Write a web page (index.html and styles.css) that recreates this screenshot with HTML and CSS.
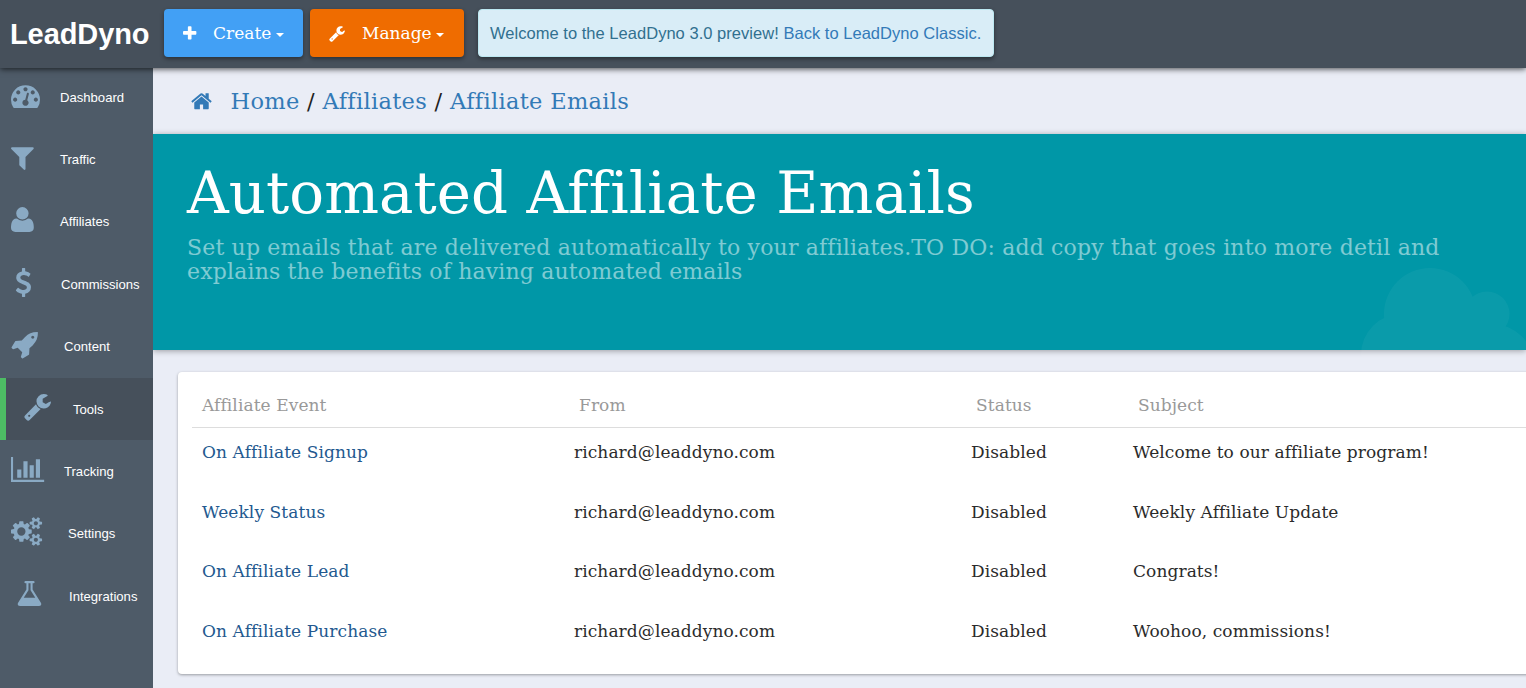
FILE: index.html
```html
<!DOCTYPE html>
<html lang="en">
<head>
<meta charset="utf-8">
<title>LeadDyno - Automated Affiliate Emails</title>
<link rel="stylesheet" href="styles.css">
</head>
<body>
<header class="topbar">
  <a class="brand">LeadDyno</a>
  <button class="btn btn-create"><svg class="btn-icon" viewBox="192 0 1408 1792"><path d="M1600 736v192q0 40-28 68t-68 28h-416v416q0 40-28 68t-68 28h-192q-40 0-68-28t-28-68v-416h-416q-40 0-68-28t-28-68v-192q0-40 28-68t68-28h416v-416q0-40 28-68t68-28h192q40 0 68 28t28 68v416h416q40 0 68 28t28 68z"/></svg><span class="btn-label">Create</span><i class="caret"></i></button>
  <button class="btn btn-manage"><svg class="btn-icon" viewBox="64 0 1664 1792"><path d="M448 1472q0-26-19-45t-45-19-45 19-19 45 19 45 45 19 45-19 19-45zm644-420l-682 682q-37 37-90 37-52 0-91-37l-106-108q-38-36-38-90 0-53 38-91l681-681q39 98 114.5 173.5t173.5 114.5zm634-435q0 39-23 106-47 134-164.5 217.5t-258.5 83.5q-185 0-316.5-131.5t-131.5-316.5 131.5-316.5 316.5-131.5q58 0 121.5 16.5t107.5 46.5q16 11 16 28t-16 28l-293 169v224l193 107q5-3 79-48.5t135.5-81 70.5-35.5q15 0 23.5 10t8.5 25z"/></svg><span class="btn-label">Manage</span><i class="caret"></i></button>
  <div class="notice"><span>Welcome to the LeadDyno 3.0 preview! <a>Back to LeadDyno Classic.</a></span></div>
</header>
<div class="layout">
  <nav class="sidebar">
    <a class="nav-item"><svg class="nav-icon" viewBox="0 0 1792 1792"><path d="M384 1152q0-53-37.5-90.5t-90.5-37.5-90.5 37.5-37.5 90.5 37.5 90.5 90.5 37.5 90.5-37.5 37.5-90.5zm192-448q0-53-37.5-90.5t-90.5-37.5-90.5 37.5-37.5 90.5 37.5 90.5 90.5 37.5 90.5-37.5 37.5-90.5zm428 481l101-382q6-26-7.5-48.5t-38.5-29.5-48 6.5-30 39.5l-101 382q-60 5-107 43.5t-63 98.5q-20 77 20 146t117 89 146-20 89-117q16-60-6-117t-72-91zm660-33q0-53-37.5-90.5t-90.5-37.5-90.5 37.5-37.5 90.5 37.5 90.5 90.5 37.5 90.5-37.5 37.5-90.5zm-640-640q0-53-37.5-90.5t-90.5-37.5-90.5 37.5-37.5 90.5 37.5 90.5 90.5 37.5 90.5-37.5 37.5-90.5zm448 192q0-53-37.5-90.5t-90.5-37.5-90.5 37.5-37.5 90.5 37.5 90.5 90.5 37.5 90.5-37.5 37.5-90.5zm320 448q0 261-141 483-19 29-54 29h-1402q-35 0-54-29-141-221-141-483 0-182 71-348t191-286 286-191 348-71 348 71 286 191 191 286 71 348z"/></svg><span>Dashboard</span></a>
    <a class="nav-item"><svg class="nav-icon" viewBox="192 0 1792 1792"><path d="M1595 295q17 41-14 70l-493 493v742q0 42-39 59-13 5-25 5-27 0-45-19l-256-256q-19-19-19-45v-486l-493-493q-31-29-14-70 17-39 59-39h1280q42 0 59 39z"/></svg><span>Traffic</span></a>
    <a class="nav-item"><svg class="nav-icon" viewBox="192 0 1792 1792"><path d="M1600 1405q0 120-73 189.5t-194 69.5h-874q-121 0-194-69.5t-73-189.5q0-53 3.5-103.5t14-109 26.5-108.5 43-97.5 62-81 85.5-53.5 111.5-20q9 0 42 21.5t74.5 48 108 48 133.5 21.5 133.5-21.5 108-48 74.5-48 42-21.5q61 0 111.5 20t85.5 53.5 62 81 43 97.5 26.5 108.5 14 109 3.5 103.5zm-320-893q0 159-112.5 271.5t-271.5 112.5-271.5-112.5-112.5-271.5 112.5-271.5 271.5-112.5 271.5 112.5 112.5 271.5z"/></svg><span>Affiliates</span></a>
    <a class="nav-item nav-commissions"><svg class="nav-icon" viewBox="128 0 1792 1792"><path d="M1362 1185q0 153-99.5 263.5t-258.5 136.5v175q0 14-9 23t-23 9h-135q-13 0-22.5-9.5t-9.5-22.5v-175q-66-9-127.5-31t-101.5-44.5-74-48-46.5-37.5-17.5-18q-17-21-2-41l103-135q7-10 23-12 15-2 24 9l2 2q113 99 243 125 37 8 74 8 81 0 142.5-43t61.5-122q0-28-15-53t-33.5-42-58.5-37.5-66-32-80-32.5q-39-16-61.5-25t-61.5-26.5-62.5-31-56.5-35.5-53.5-42.5-43.5-49-35.5-58-21-66.5-8.5-78q0-138 98-242t255-134v-180q0-13 9.5-22.5t22.5-9.5h135q14 0 23 9t9 23v176q57 6 110.5 23t87 33.5 63.5 37.5 39 29 15 14q17 18 5 38l-81 146q-8 15-23 16-14 3-27-7-3-3-14.5-12t-39-26.5-58.5-32-74.5-26-85.5-11.5q-95 0-155 43t-60 111q0 26 8.5 48t29.5 41.5 39.5 33 56 31 60.5 27 70 27.5q53 20 81 31.5t76 35 75.5 42.5 62 50 53 63.5 31.5 76.5 13 94z"/></svg><span>Commissions</span></a>
    <a class="nav-item nav-wide"><svg class="nav-icon" viewBox="0 0 1792 1792"><path d="M1440 448q0-40-28-68t-68-28-68 28-28 68 28 68 68 28 68-28 28-68zm224-288q0 249-75.5 430.5t-253.5 360.5q-81 80-195 176l-20 379q-2 16-16 26l-384 224q-7 4-16 4-12 0-23-9l-64-64q-13-14-8-32l85-276-281-281-276 85q-3 1-9 1-14 0-23-9l-64-64q-17-19-5-39l224-384q10-14 26-16l379-20q96-114 176-195 188-187 358-258t431-71q14 0 24 9.5t10 22.5z"/></svg><span>Content</span></a>
    <a class="nav-item nav-active"><svg class="nav-icon" viewBox="0 0 1792 1792"><path d="M448 1472q0-26-19-45t-45-19-45 19-19 45 19 45 45 19 45-19 19-45zm644-420l-682 682q-37 37-90 37-52 0-91-37l-106-108q-38-36-38-90 0-53 38-91l681-681q39 98 114.5 173.5t173.5 114.5zm634-435q0 39-23 106-47 134-164.5 217.5t-258.5 83.5q-185 0-316.5-131.5t-131.5-316.5 131.5-316.5 316.5-131.5q58 0 121.5 16.5t107.5 46.5q16 11 16 28t-16 28l-293 169v224l193 107q5-3 79-48.5t135.5-81 70.5-35.5q15 0 23.5 10t8.5 25z"/></svg><span>Tools</span></a>
    <a class="nav-item nav-wide"><svg class="nav-icon" viewBox="0 0 1792 1792"><path d="M640 896v512h-256v-512h256zm384-512v1024h-256v-1024h256zm1024 1152v128h-2048v-1536h128v1408h1920zm-640-896v768h-256v-768h256zm384-384v1152h-256v-1152h256z"/></svg><span>Tracking</span></a>
    <a class="nav-item nav-settings"><svg class="nav-icon" viewBox="0 0 1792 1792"><path d="M896 896q0-106-75-181t-181-75-181 75-75 181 75 181 181 75 181-75 75-181zm768 512q0-52-38-90t-90-38-90 38-38 90q0 53 37.5 90.5t90.5 37.5 90.5-37.5 37.5-90.5zm0-1024q0-52-38-90t-90-38-90 38-38 90q0 53 37.5 90.5t90.5 37.5 90.5-37.5 37.5-90.5zm-384 421v185q0 10-7 19.5t-16 10.5l-155 24q-11 35-32 76 34 48 90 115 7 11 7 20 0 12-7 19-23 30-82.5 89.5t-78.5 59.5q-11 0-21-7l-115-90q-37 19-77 31-11 108-23 155-7 24-30 24h-186q-11 0-20-7.5t-10-17.5l-23-153q-34-10-75-31l-118 89q-7 7-20 7-11 0-21-8-144-133-144-160 0-9 7-19 10-14 41-53t47-61q-23-44-35-82l-152-24q-10-1-17-9.5t-7-19.5v-185q0-10 7-19.5t16-10.5l155-24q11-35 32-76-34-48-90-115-7-11-7-20 0-12 7-20 22-30 82-89t79-59q11 0 21 7l115 90q34-18 77-32 11-108 23-154 7-24 30-24h186q11 0 20 7.5t10 17.5l23 153q34 10 75 31l118-89q8-7 20-7 11 0 21 8 144 133 144 160 0 8-7 19-12 16-42 54t-45 60q23 48 34 82l152 23q10 2 17 10.5t7 19.5zm640 533v140q0 16-149 31-12 27-30 52 51 113 51 138 0 4-4 7-122 71-124 71-8 0-46-47t-52-68q-20 2-30 2t-30-2q-14 21-52 68t-46 47q-2 0-124-71-4-3-4-7 0-25 51-138-18-25-30-52-149-15-149-31v-140q0-16 149-31 13-29 30-52-51-113-51-138 0-4 4-7 4-2 35-20t59-34 30-16q8 0 46 46.5t52 67.5q20-2 30-2t30 2q51-71 92-112l6-2q4 0 124 70 4 3 4 7 0 25-51 138 17 23 30 52 149 15 149 31zm0-1024v140q0 16-149 31-12 27-30 52 51 113 51 138 0 4-4 7-122 71-124 71-8 0-46-47t-52-68q-20 2-30 2t-30-2q-14 21-52 68t-46 47q-2 0-124-71-4-3-4-7 0-25 51-138-18-25-30-52-149-15-149-31v-140q0-16 149-31 13-29 30-52-51-113-51-138 0-4 4-7 4-2 35-20t59-34 30-16q8 0 46 46.5t52 67.5q20-2 30-2t30 2q51-71 92-112l6-2q4 0 124 70 4 3 4 7 0 25-51 138 17 23 30 52 149 15 149 31z"/></svg><span>Settings</span></a>
    <a class="nav-item nav-integrations"><svg class="nav-icon" viewBox="0 0 1792 1792"><path d="M1591 1448q56 89 21.5 152.5t-140.5 63.5h-1152q-106 0-140.5-63.5t21.5-152.5l503-793v-399h-64q-26 0-45-19t-19-45 19-45 45-19h512q26 0 45 19t19 45-19 45-45 19h-64v399zm-779-725l-272 429h712l-272-429-20-31v-436h-128v436z"/></svg><span>Integrations</span></a>
  </nav>
  <main class="content">
    <div class="crumbs"><svg class="home-icon" viewBox="64 0 1664 1792"><path d="M1472 992v480q0 26-19 45t-45 19h-384v-384h-256v384h-384q-26 0-45-19t-19-45v-480q0-1 .5-3t.5-3l575-474 575 474q1 2 1 6zm223-69l-62 74q-8 9-21 11h-3q-13 0-21-7l-692-577-692 577q-12 8-24 7-13-2-21-11l-62-74q-8-10-7-23.5t11-21.5l719-599q32-26 76-26t76 26l244 204v-195q0-14 9-23t23-9h192q14 0 23 9t9 23v408l219 182q10 8 11 21.5t-7 23.5z"/></svg><span><a>Home</a> / <a>Affiliates</a> / <a>Affiliate Emails</a></span></div>
    <section class="banner">
      <h1>Automated Affiliate Emails</h1>
      <p>Set up emails that are delivered automatically to your affiliates.TO DO: add copy that goes into more detil and<br>explains the benefits of having automated emails</p>
      <svg class="cloud" viewBox="0 0 166 130"><circle cx="69" cy="46" r="46"/><circle cx="126" cy="46" r="22.5"/><circle cx="41.500" cy="87" r="41.500"/><circle cx="131" cy="98" r="42"/><path d="M41 60h90v70h-90z"/></svg>
    </section>
    <section class="card">
      <table class="emails">
        <colgroup><col class="col-event"><col class="col-from"><col class="col-status"><col></colgroup>
        <thead><tr><th class="first">Affiliate Event</th><th>From</th><th>Status</th><th>Subject</th></tr></thead>
        <tbody>
          <tr><td><a>On Affiliate Signup</a></td><td>richard@leaddyno.com</td><td>Disabled</td><td>Welcome to our affiliate program!</td></tr>
          <tr><td><a>Weekly Status</a></td><td>richard@leaddyno.com</td><td>Disabled</td><td>Weekly Affiliate Update</td></tr>
          <tr><td><a>On Affiliate Lead</a></td><td>richard@leaddyno.com</td><td>Disabled</td><td>Congrats!</td></tr>
          <tr><td><a>On Affiliate Purchase</a></td><td>richard@leaddyno.com</td><td>Disabled</td><td>Woohoo, commissions!</td></tr>
        </tbody>
      </table>
    </section>
  </main>
</div>
</body>
</html>
```

FILE: styles.css
```css
* { box-sizing: border-box; }
body {
  margin: 0;
  height: 688px;
  overflow: hidden;
  display: flex;
  flex-direction: column;
  background: #eaedf6;
  color: #212121;
  font-family: "DejaVu Serif", serif;
}

/* Top bar */
.topbar {
  position: relative;
  z-index: 2;
  flex: none;
  display: flex;
  align-items: center;
  height: 68px;
  padding: 0 0 2px 9px;
  background: #46505b;
  box-shadow: 0 1px 6px rgba(0, 0, 0, .7);
}
.brand {
  width: 155px;
  padding: 1px 0 0 1px;
  color: #fff;
  font: bold 29px/48px "Liberation Sans", sans-serif;
  letter-spacing: -.1px;
}
.btn {
  display: flex;
  align-items: center;
  height: 48px;
  padding: 0 19px;
  border: 0;
  border-radius: 4px;
  color: #fff;
  font: 17px/24px "DejaVu Serif", serif;
  letter-spacing: .02px;
  box-shadow: 0 2px 4px rgba(0, 0, 0, .4);
}
.btn-create { width: 139px; background: #42a0f5; }
.btn-manage { width: 154px; margin-left: 7px; background: #ef6c00; }
.btn-icon { height: 17px; fill: #fff; overflow: visible; }
.btn-create .btn-icon { width: 13.400px; margin-right: 16.600px; }
.btn-manage .btn-icon { width: 16px; margin-right: 17px; }
.caret {
  margin: 3px 0 0 4.500px;
  border-top: 4px solid #fff;
  border-left: 4px solid transparent;
  border-right: 4px solid transparent;
}
.notice {
  display: flex;
  align-items: center;
  width: 516px;
  height: 48px;
  margin-left: 14px;
  padding-left: 11px;
  border: 1px solid #bce8f1;
  border-radius: 4px;
  background: #d9edf7;
  box-shadow: 0 2px 4px rgba(0, 0, 0, .4);
  color: #31708f;
  font: 16.500px/24px "Liberation Sans", sans-serif;
  letter-spacing: .03px;
  white-space: nowrap;
}
.notice a, .crumbs a { color: #337ab7; }

.layout { flex: 1; display: flex; min-height: 0; }

/* Side navigation */
.sidebar {
  position: relative;
  z-index: 1;
  flex: none;
  width: 153px;
  margin-top: -1.600px;
  background: #4e5b68;
}
.nav-item {
  display: grid;
  grid-template-columns: 49px 1fr;
  align-items: center;
  height: 62.330px;
  padding-left: 11px;
  color: #fff;
  font: 13.100px/20px "Liberation Sans", sans-serif;
}
.nav-icon { width: 29px; height: 29px; margin-bottom: 4.500px; fill: #8aaac4; overflow: visible; }
.nav-commissions { grid-template-columns: 50px 1fr; }
.nav-wide { grid-template-columns: 53px 1fr; }
.nav-settings { grid-template-columns: 57px 1fr; }
.nav-integrations { padding-left: 15px; grid-template-columns: 54px 1fr; }
.nav-active {
  padding-left: 17px;
  grid-template-columns: 50px 1fr;
  border-left: 6px solid #4dbd64;
  background: #46505b;
}
.nav-active span, .nav-integrations span { padding-top: 1.500px; }

/* Page content */
.content { flex: 1; min-width: 0; }
.crumbs {
  display: flex;
  align-items: center;
  height: 66px;
  padding-left: 38px;
  font-size: 22.500px;
  letter-spacing: .32px;
}
.home-icon { width: 21px; height: 22.500px; margin-right: 18.500px; fill: #337ab7; }
.banner {
  position: relative;
  height: 216px;
  padding: 25px 34px 0;
  background: #0097a7;
  box-shadow: 0 1px 6px rgba(0, 0, 0, .35);
}
.banner h1 {
  margin: 0;
  color: #fff;
  font-size: 57.800px;
  font-weight: 400;
  line-height: 68px;
  letter-spacing: .05px;
  white-space: nowrap;
}
.banner p {
  margin: 9px 0 0;
  color: rgba(255, 255, 255, .5);
  font-size: 22px;
  line-height: 24px;
  letter-spacing: .16px;
  white-space: nowrap;
}
.cloud {
  position: absolute;
  top: 133.500px;
  right: -1px;
  width: 166px;
  height: 130px;
  fill: #fff;
  opacity: .04;
}
.card {
  position: relative;
  width: 1400px;
  height: 302px;
  margin: 22px 0 0 25px;
  padding: 11px 14px;
  border-radius: 4px;
  background: #fff;
  box-shadow: 0 1px 3px rgba(0, 0, 0, .35);
}
.emails {
  width: 100%;
  table-layout: fixed;
  border-collapse: collapse;
  font-size: 17px;
  letter-spacing: .09px;
}
.col-event { width: 372px; }
.col-from { width: 397px; }
.col-status { width: 162px; }
.emails th {
  height: 44.500px;
  padding: 0 15px 1px;
  border-bottom: 1px solid #ddd;
  color: #999;
  font-weight: 400;
  text-align: left;
}
.emails th.first { padding-left: 10px; }
.emails td { height: 59.700px; padding: 0 10px 11px; color: #2b2b2b; }
.emails a { color: #23598f; }
```
